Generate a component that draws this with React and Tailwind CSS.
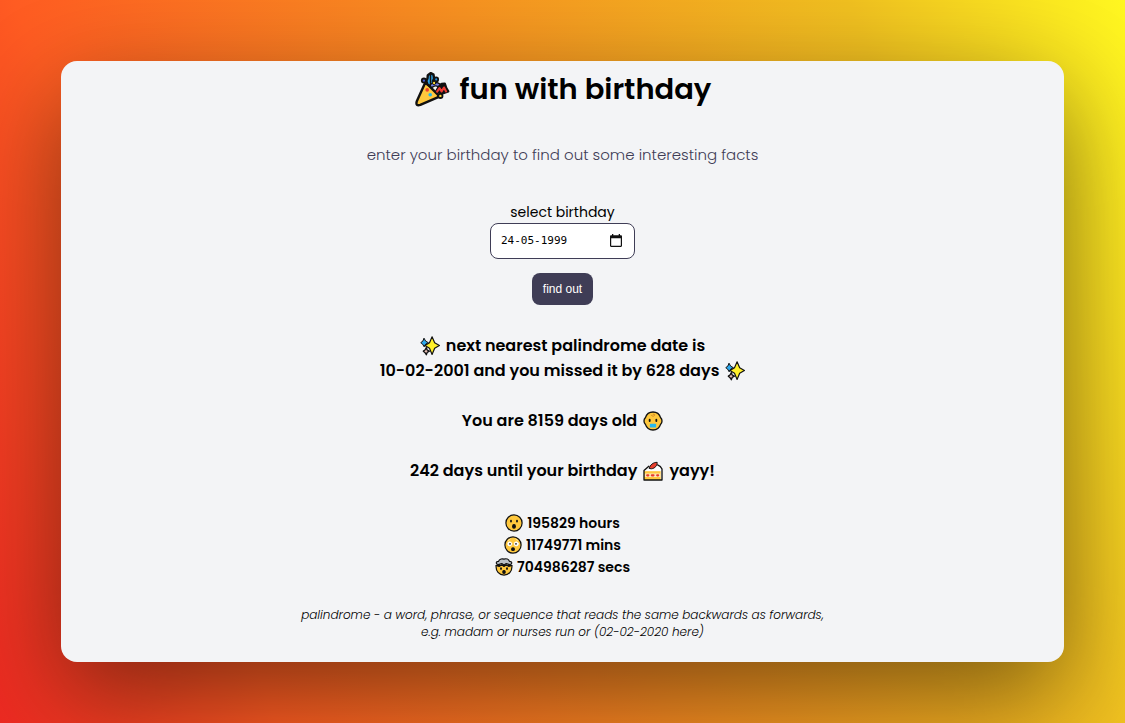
import React from "react";

function Emoji({ label, className, children }) {
  return (
    <svg
      viewBox="0 0 24 24"
      role="img"
      aria-label={label}
      className={className}
      fill="none"
      stroke="#111"
      strokeWidth="1.6"
      strokeLinejoin="round"
      strokeLinecap="round"
    >
      {children}
    </svg>
  );
}

const medium = "inline-block size-5 shrink-0";
const small = "inline-block size-[18px] shrink-0";

function Popper() {
  return (
    <Emoji label="party popper" className="size-9 shrink-0">
      <path d="M7 8.8 8.6 8.4 16.4 16.2 15.8 17.6 4.2 22.6Q1 23.6 1.8 20.4Z" fill="#ffc83d" />
      <path d="M9 9 8.2 6.6 9 5 9.2 2.8 11.2 1.4 13 2.4 13.4 5 12.6 7 13 9 11.6 10.6Z" fill="#2ea8ee" />
      <path d="M11 2.5v7" strokeWidth="1" />
      <path d="M12 9.6c2.6-1.6 5-.6 6 1.6" stroke="#111" strokeWidth="3.2" />
      <path d="M12 9.6c2.6-1.6 5-.6 6 1.6" stroke="#7580e8" strokeWidth="1.4" />
      <path d="M14.5 14 16.5 10.6 18.5 8.6 20.5 8.4 21.5 11.4 22.8 13.6 19.5 14.8Z" fill="#111" />
      <path d="m15.4 13.8 1.6-2.4 1.4 2.2 1.6-2.6 1.4 2.6" stroke="#f03a32" strokeWidth="1.4" />
      <circle cx="6.6" cy="6.4" r="1.4" fill="#435bd0" strokeWidth="1.2" />
      <circle cx="14.8" cy="5.6" r="1.3" fill="#258fe0" strokeWidth="1.2" />
      <circle cx="13.4" cy="8" r="1.1" fill="#ffda38" strokeWidth=".6" />
      <circle cx="17.6" cy="16.6" r="1.4" fill="#ffda38" strokeWidth="1.2" />
      <g stroke="none">
        <circle cx="8.8" cy="12.6" r="1.2" fill="#ed3f2e" />
        <circle cx="10.8" cy="15.8" r="1.2" fill="#25b7ed" />
      </g>
    </Emoji>
  );
}

function Sparkles() {
  return (
    <Emoji label="sparkles" className={medium}>
      <path d="m7.6 14 1 2.8 2.6 1.4-2.6 1.5-1 2.8-1.8-2.8-1.8-1.5 2-1.4Z" fill="#efc3ba" />
      <path d="m5 3 1.8 3.2L10 8 6.800 9.800 5 13 3.200 9.800.9 8l2.300-1.800Z" fill="#2ca8ee" strokeWidth="1.200" />
      <path d="m14.500 1 3.100 7.200 5.700 3.300-5.700 3.300-3.100 7.400-3.100-7.400-5.400-3.300 5.400-3.300Z" fill="#fff02a" strokeWidth="1.400" />
    </Emoji>
  );
}

function Baby() {
  return (
    <Emoji label="baby" className={medium}>
      <path d="M12 1.200C16.500 1.200 20 4.400 21.200 8.200 22.300 9.200 22.800 10.500 22.800 12s-.5 2.800-1.600 3.800C20 19.600 16.500 22.800 12 22.800S4 19.600 2.800 15.800C1.700 14.800 1.200 13.500 1.200 12s.5-2.800 1.600-3.800C4 4.400 7.500 1.200 12 1.200Z" fill="#ffc83d" />
      <path d="M10 5c.5 1.800 4.200 1.800 4-.5-.2-1.200-1.700-1.300-2-.2" stroke="#ce8420" strokeWidth="1.1" />
      <path d="M8 10.500v1.600M16 10.500v1.600" strokeWidth="2.200" />
      <path d="M9 16.200h6v2.800H9Z" fill="#27b8ef" stroke="#27b8ef" />
    </Emoji>
  );
}

function Cake() {
  return (
    <Emoji label="cake" className={medium}>
      <path d="M1.200 11.500 9 4.500q11-3 13.800 5V22.800H1.200Z" fill="#fff" stroke="none" />
      <path d="M1.200 12.200h20v10.600h-20Z" fill="#ffc83d" stroke="none" />
      <path d="M2 15h19v4.200H2Z" fill="#ffe7b7" stroke="none" />
      <path d="M5 17.200h1.400M10.600 17.200h2M17 17.200h1.200" stroke="#e83c2e" strokeWidth="2.600" />
      <path d="M7.500 8.500C8.500 4.500 12.500 1.500 17 1.600 17.400 5 14.500 9 10.500 9.300Z" fill="#e9402e" strokeWidth="1.200" />
      <path d="M7 6.200 1.200 11.500v11.300h21.600V9.500C21.800 7 20 5.500 17.500 4.600" />
    </Emoji>
  );
}

function Face({ label, children }) {
  return (
    <Emoji label={label} className={small}>
      <circle cx="12" cy="12" r="10.800" fill="#ffc83d" />
      {children}
    </Emoji>
  );
}

function Surprised() {
  return (
    <Face label="surprised face">
      <path d="M8 9v1M16 9v1" strokeWidth="2.400" />
      <ellipse cx="12" cy="16.500" rx="1.800" ry="2.400" fill="#111" />
    </Face>
  );
}

function Astonished() {
  return (
    <Face label="flushed face">
      <path d="m5.500 6 2.500-1.600M16 4.400l2.500 1.600" stroke="#fff0ba" strokeWidth="1.200" />
      <circle cx="7.600" cy="10.500" r="2.700" fill="#fff" stroke="#fff" strokeWidth="1" />
      <circle cx="16.400" cy="10.500" r="2.700" fill="#fff" stroke="#fff" strokeWidth="1" />
      <path d="M8 10.400v.2M16 10.400v.2" strokeWidth="2.200" />
      <ellipse cx="12" cy="17.500" rx="1.800" ry="1.800" fill="#111" />
    </Face>
  );
}

function MindBlown() {
  return (
    <Emoji label="exploding head" className={small}>
      <path d="M1.500 10h21c.8 7.500-4 12.800-10.500 12.800S.7 17.500 1.500 10Z" fill="#ffc83d" />
      <path d="M4.500 8.800C.5 8 1 4.500 4.600 4.600 6 1 10 .7 12 1.500c3-1 6.300.2 7.300 3 3.800 0 4.300 3.600.2 4.300L15 7.500l-3 1.800-3-1.800Z" fill="#b9c0c6" />
      <path d="m1.500 10 4 1.300L9 9l3 2.200L15 9l3.500 2.300 4-1.300" />
      <path d="M8 13.500v1M16 13.500v1" strokeWidth="2.500" />
      <ellipse cx="12" cy="18.600" rx="1.600" ry="1.800" fill="#111" />
    </Emoji>
  );
}

function CalendarIcon() {
  return (
    <svg viewBox="0 0 14 14" className="size-3.5" aria-hidden="true">
      <path
        fill="#111"
        fillRule="evenodd"
        d="M3 0h1.300v1.300h5.400V0H11v1.300h.9c.6 0 1.100.5 1.100 1.100v9.400c0 .6-.5 1.100-1.100 1.100H2.100C1.500 12.900 1 12.400 1 11.800V2.400c0-.6.5-1.100 1.100-1.100H3ZM2.200 4.200v7.500h9.600V4.200Z"
      />
    </svg>
  );
}

const fact = "flex items-center justify-center gap-1.5";
const total = "flex items-center justify-center gap-1";

export default function App() {
  return (
    <div className="min-h-screen bg-[linear-gradient(70deg,#ee2a22,#ff5c22_20%,#f0c020_80%,#fff720)] p-[61px] font-[Poppins,Inter,sans-serif] text-black">
      <main className="flex flex-col items-center rounded-2xl bg-[#f3f4f6] px-4 pt-2 pb-5 text-center shadow-[0_35px_100px_rgba(0,0,0,0.48)]">
        <h1 className="flex items-center gap-2.5 text-[29px] leading-10 font-semibold">
          <Popper />
          fun with birthday
        </h1>
        <p className="mt-8 text-[15px] leading-7 font-light text-[#3f3d56]">
          enter your birthday to find out some interesting facts
        </p>
        <form className="mt-8 flex flex-col items-center" onSubmit={(e) => e.preventDefault()}>
          <label htmlFor="birthday" className="text-sm leading-[22px]">
            select birthday
          </label>
          <div className="flex h-9 w-[145px] items-center rounded-lg border border-[#3f3d56] bg-white px-2.5">
            <input
              id="birthday"
              type="text"
              defaultValue="24-05-1999"
              className="w-full min-w-0 bg-transparent font-['DejaVu_Sans_Mono',monospace] text-[11px] outline-none"
            />
            <button type="button" aria-label="open calendar" className="mr-px">
              <CalendarIcon />
            </button>
          </div>
          <button
            type="submit"
            className="mt-3.5 h-8 rounded-lg bg-[#3f3d56] px-[11px] font-['Liberation_Sans',Arial,sans-serif] text-xs text-white"
          >
            find out
          </button>
        </form>
        <section className="mt-7 flex flex-col gap-[25px] text-base leading-[25px] font-semibold">
          <div>
            <p className={fact}><Sparkles /> next nearest palindrome date is</p>
            <p className={fact}>10-02-2001 and you missed it by 628 days <Sparkles /></p>
          </div>
          <p className={fact}>You are 8159 days old <Baby /></p>
          <p className={fact}>242 days until your birthday <Cake /> yayy!</p>
        </section>
        <section className="mt-[29px] text-sm leading-[22px] font-semibold">
          <p className={total}><Surprised /> 195829 hours</p>
          <p className={total}><Astonished /> 11749771 mins</p>
          <p className={total}><MindBlown /> 704986287 secs</p>
        </section>
        <p className="mt-7 mb-0.5 text-xs leading-[17px] font-light italic">
          palindrome - a word, phrase, or sequence that reads the same backwards as forwards,
          <br />
          e.g. madam or nurses run or (02-02-2020 here)
        </p>
      </main>
    </div>
  );
}
